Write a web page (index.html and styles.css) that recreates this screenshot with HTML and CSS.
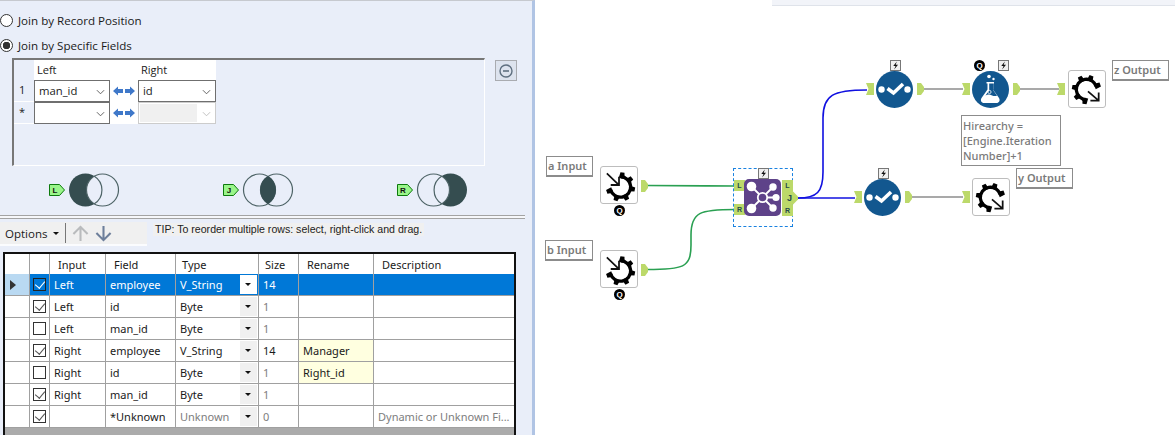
FILE: index.html
```html
<!DOCTYPE html>
<html lang="en">
<head>
<meta charset="utf-8">
<title>Join tool</title>
<link rel="stylesheet" href="styles.css">
</head>
<body>
<svg class="defs" width="0" height="0" aria-hidden="true">
  <defs>
    <g id="swap">
      <path d="M0 5l5-4.500V3h5v4H5v2.500z" fill="#3f78c9"/>
      <path d="M22 5l-5-4.500V3h-5v4h5v2.500z" fill="#3f78c9"/>
    </g>
    <path id="boltp" d="M6.500.5L2.500 5.500h2.500L3.500 9.500 7.800 4.200H5.200z" fill="#111"/>
    <g id="gear">
      <path d="M0-10.500A10.500 10.500 0 1 1-10.140 2.720" fill="none" stroke="#000" stroke-width="3.400"/>
      <g fill="#000">
        <path d="M-3-9l.9-6h4.200l.9 6z" transform="rotate(8)"/>
        <path d="M-3-9l.9-6h4.200l.9 6z" transform="rotate(52)"/>
        <path d="M-3-9l.9-6h4.200l.9 6z" transform="rotate(100)"/>
        <path d="M-3-9l.9-6h4.200l.9 6z" transform="rotate(152)"/>
        <path d="M-3-9l.9-6h4.200l.9 6z" transform="rotate(200)"/>
        <path d="M-3-9l.9-6h4.200l.9 6z" transform="rotate(250)"/>
      </g>
    </g>
    <g id="check">
      <circle cx="18.500" cy="18.500" r="18.500" fill="#12578f"/>
      <circle cx="5.500" cy="18.500" r="3.200" fill="#fff"/>
      <circle cx="31.500" cy="18.500" r="3.200" fill="#fff"/>
      <path d="M11.500 17.500l6 4.500 9.500-9" fill="none" stroke="#fff" stroke-width="3.600"/>
    </g>
    <path id="inport" d="M0 0h8v12H0l2.500-6z"/>
    <path id="outport" d="M0 0h4l3 4v4l-3 4H0z"/>
    <g id="setL">
      <circle cx="36.500" cy="17" r="16.500" fill="#354d50"/>
      <circle cx="53.500" cy="17" r="16" fill="#e9eef9" stroke="#4e6467" stroke-width="1.200"/>
      <path d="M45 2.900A16.500 16.500 0 0 1 45 31.100" fill="none" stroke="#4e6467" stroke-width="1.200"/>
    </g>
    <g id="setJ">
      <circle cx="36.500" cy="17" r="16" fill="none" stroke="#4e6467" stroke-width="1.200"/>
      <circle cx="53.500" cy="17" r="16" fill="none" stroke="#4e6467" stroke-width="1.200"/>
      <path d="M45 2.900A16.500 16.500 0 0 1 45 31.100A16.500 16.500 0 0 1 45 2.900z" fill="#354d50"/>
    </g>
    <g id="setR">
      <circle cx="53.500" cy="17" r="16.500" fill="#354d50"/>
      <circle cx="36.500" cy="17" r="16" fill="#e9eef9" stroke="#4e6467" stroke-width="1.200"/>
      <path d="M45 2.900A16.500 16.500 0 0 0 45 31.100" fill="none" stroke="#4e6467" stroke-width="1.200"/>
    </g>
  </defs>
</svg>
<div class="app">
  <section class="config">
    <div class="radio-row"><span class="radio"></span><span>Join by Record Position</span></div>
    <div class="radio-row second"><span class="radio on"></span><span>Join by Specific Fields</span></div>
    <div class="fields-line">
      <div class="fields">
        <div class="f-head"><span class="f-num"></span><span class="f-left">Left</span><span class="f-arrows"></span><span class="f-right">Right</span></div>
        <div class="f-row">
          <span class="f-num">1</span>
          <span class="combo">man_id<svg class="chev" viewBox="0 0 10 6"><path d="M1 1l4 4 4-4" fill="none" stroke="#555"/></svg></span>
          <span class="f-arrows"><svg viewBox="0 0 22 10"><use href="#swap"/></svg></span>
          <span class="combo wide">id<svg class="chev" viewBox="0 0 10 6"><path d="M1 1l4 4 4-4" fill="none" stroke="#555"/></svg></span>
        </div>
        <div class="f-row">
          <span class="f-num star">*</span>
          <span class="combo"><svg class="chev" viewBox="0 0 10 6"><path d="M1 1l4 4 4-4" fill="none" stroke="#555"/></svg></span>
          <span class="f-arrows"><svg viewBox="0 0 22 10"><use href="#swap"/></svg></span>
          <span class="combo wide off"><i></i><svg class="chev" viewBox="0 0 10 6"><path d="M1 1l4 4 4-4" fill="none" stroke="#bbb"/></svg></span>
        </div>
      </div>
      <button class="minus" type="button"><svg viewBox="0 0 14 14"><circle cx="7" cy="7" r="6" fill="none" stroke="#5f7080" stroke-width="1.400"/><path d="M4 7h6" stroke="#5f7080" stroke-width="1.600"/></svg></button>
    </div>
    <div class="venns">
      <div class="venn">
        <svg viewBox="0 0 72 34" width="72" height="34"><path class="tag" d="M.5 11.500h10l5 5.500-5 5.500H.5z"/><text class="tag-t" x="6" y="20">L</text><use href="#setL"/></svg>
      </div>
      <div class="venn">
        <svg viewBox="0 0 72 34" width="72" height="34"><path class="tag" d="M.5 11.500h10l5 5.500-5 5.500H.5z"/><text class="tag-t" x="6" y="20">J</text><use href="#setJ"/></svg>
      </div>
      <div class="venn">
        <svg viewBox="0 0 72 34" width="72" height="34"><path class="tag" d="M.5 11.500h10l5 5.500-5 5.500H.5z"/><text class="tag-t" x="6" y="20">R</text><use href="#setR"/></svg>
      </div>
    </div>
    <div class="rule"></div>
    <div class="toolbar-line">
      <div class="toolbar">
        <span class="opt">Options</span><span class="caret"></span><span class="sep"></span>
        <svg class="arrow" viewBox="0 0 18 18"><path d="M9 17V2M1.500 9.500L9 2l7.500 7.500" fill="none" stroke="#b9bbbd" stroke-width="2.200"/></svg>
        <svg class="arrow" viewBox="0 0 18 18"><path d="M9 1v15M1.500 8.500L9 16l7.500-7.500" fill="none" stroke="#6d7f9b" stroke-width="2.200"/></svg>
      </div>
      <span class="tip">TIP: To reorder multiple rows: select, right-click and drag.</span>
    </div>
    <div class="grid">
      <div class="g-row g-head">
        <span class="c0"></span><span class="c1"></span><span class="c2">Input</span><span class="c3">Field</span><span class="c4 hd-s">Type</span><span class="c5 hd-s">Size</span><span class="c6">Rename</span><span class="c7">Description</span>
      </div>
      <div class="g-row sel">
        <span class="c0"><b class="ptr"></b></span><span class="c1"><i class="cb on"></i></span><span class="c2">Left</span><span class="c3">employee</span><span class="c4">V_String<i class="dd"></i></span><span class="c5">14</span><span class="c6"></span><span class="c7"></span>
      </div>
      <div class="g-row">
        <span class="c0"></span><span class="c1"><i class="cb on"></i></span><span class="c2">Left</span><span class="c3">id</span><span class="c4">Byte<i class="dd"></i></span><span class="c5 dim">1</span><span class="c6"></span><span class="c7"></span>
      </div>
      <div class="g-row">
        <span class="c0"></span><span class="c1"><i class="cb"></i></span><span class="c2">Left</span><span class="c3">man_id</span><span class="c4">Byte<i class="dd"></i></span><span class="c5 dim">1</span><span class="c6"></span><span class="c7"></span>
      </div>
      <div class="g-row">
        <span class="c0"></span><span class="c1"><i class="cb on"></i></span><span class="c2">Right</span><span class="c3">employee</span><span class="c4">V_String<i class="dd"></i></span><span class="c5">14</span><span class="c6 ren">Manager</span><span class="c7"></span>
      </div>
      <div class="g-row">
        <span class="c0"></span><span class="c1"><i class="cb"></i></span><span class="c2">Right</span><span class="c3">id</span><span class="c4">Byte<i class="dd"></i></span><span class="c5 dim">1</span><span class="c6 ren">Right_id</span><span class="c7"></span>
      </div>
      <div class="g-row">
        <span class="c0"></span><span class="c1"><i class="cb on"></i></span><span class="c2">Right</span><span class="c3">man_id</span><span class="c4">Byte<i class="dd"></i></span><span class="c5 dim">1</span><span class="c6"></span><span class="c7"></span>
      </div>
      <div class="g-row">
        <span class="c0"></span><span class="c1"><i class="cb on"></i></span><span class="c2"></span><span class="c3">*Unknown</span><span class="c4 dim">Unknown<i class="dd"></i></span><span class="c5 dim">0</span><span class="c6"></span><span class="c7 dim">Dynamic or Unknown Fi...</span>
      </div>
      <div class="g-fill"></div>
    </div>
  </section>

  <section class="canvas">
    <div class="topstrip"></div>
    <svg class="wires" viewBox="0 0 640 435" width="640" height="435">
      <path class="wire g" d="M112 185.500C150 185.500 170 186 200 186"/>
      <path class="wire g" d="M112 269.500C148 269.500 156 268 156 245V235C156 212 165 209.500 200 209.500"/>
      <path class="wire b" d="M263 198C282 198 288 192 288 172V118C288 95 298 90 332 90"/>
      <path class="wire b" d="M263 198H320"/>
      <path class="wire n" d="M388 89H428"/>
      <path class="wire n" d="M484 89H524"/>
      <path class="wire n" d="M376 197H428"/>
    </svg>

    <div class="note n-a">a Input</div>
    <div class="note n-b">b Input</div>
    <div class="note n-z">z Output</div>
    <div class="note n-y">y Output</div>
    <div class="note hier">Hirearchy =<br>[Engine.Iteration<br>Number]+1</div>

    <!-- inputs -->
    <div class="tool" style="left:65px;top:166px"><svg viewBox="0 0 37 37"><use href="#gear" transform="translate(20 20.500)"/><path class="darrow" d="M6 6.500l12 11.500M18.500 10v8.500H10"/></svg></div>
    <span class="q" style="left:79px;top:205px">Q</span>
    <div class="tool" style="left:65px;top:250px"><svg viewBox="0 0 37 37"><use href="#gear" transform="translate(20 20.500)"/><path class="darrow" d="M6 6.500l12 11.500M18.500 10v8.500H10"/></svg></div>
    <span class="q" style="left:79px;top:289px">Q</span>
    <svg class="anc" style="left:106px;top:180px" viewBox="0 0 7 12"><use href="#outport"/></svg>
    <svg class="anc" style="left:106px;top:264px" viewBox="0 0 7 12"><use href="#outport"/></svg>

    <!-- join -->
    <div class="selbox"></div>
    <span class="bolt" style="left:223px;top:168px"><svg viewBox="0 0 10 10"><use href="#boltp"/></svg></span>
    <span class="port" style="left:199px;top:180px">L</span>
    <span class="port" style="left:199px;top:204px">R</span>
    <svg class="join" viewBox="0 0 37 37">
      <rect width="37" height="37" rx="5" fill="#5e4289"/>
      <g stroke="#fff" stroke-width="1.800" fill="none"><path d="M9 9l6 6M28 9l-6 6M9 28l6-6M28 28l-6-6M23 18.500h7"/><circle cx="18.500" cy="18.500" r="4.700"/></g>
      <g fill="#fff"><circle cx="7.500" cy="7.500" r="4.800"/><circle cx="29" cy="8" r="3.700"/><circle cx="32" cy="18.500" r="3.600"/><circle cx="7.500" cy="29.500" r="4.800"/><circle cx="29" cy="29" r="3.700"/></g>
    </svg>
    <span class="port" style="left:247px;top:180px">L</span>
    <span class="port" style="left:247px;top:205px">R</span>
    <span class="jout">J</span>

    <!-- filters -->
    <span class="bolt" style="left:355px;top:60px"><svg viewBox="0 0 10 10"><use href="#boltp"/></svg></span>
    <svg class="node" style="left:341px;top:71px" viewBox="0 0 37 37"><use href="#check"/></svg>
    <svg class="inp" style="left:331px;top:83px" viewBox="0 0 8 12"><use href="#inport"/></svg>
    <svg class="anc" style="left:382px;top:83px" viewBox="0 0 7 12"><use href="#outport"/></svg>

    <span class="bolt" style="left:343px;top:168px"><svg viewBox="0 0 10 10"><use href="#boltp"/></svg></span>
    <svg class="node" style="left:329px;top:179px" viewBox="0 0 37 37"><use href="#check"/></svg>
    <svg class="inp" style="left:319px;top:191px" viewBox="0 0 8 12"><use href="#inport"/></svg>
    <svg class="anc" style="left:370px;top:191px" viewBox="0 0 7 12"><use href="#outport"/></svg>

    <!-- formula -->
    <span class="q" style="left:439px;top:60px">Q</span>
    <span class="bolt" style="left:463px;top:60px"><svg viewBox="0 0 10 10"><use href="#boltp"/></svg></span>
    <svg class="node" style="left:437px;top:71px" viewBox="0 0 37 37">
      <circle cx="18.500" cy="18.500" r="18.500" fill="#12578f"/>
      <g fill="#fff"><circle cx="17" cy="5.500" r="1.800"/><circle cx="21.500" cy="8" r="1.200"/>
      <path d="M14.500 11h7.500v1.500h-1v6l6 8.500c1.500 2.500 0 5-2.500 5H12c-2.500 0-4-2.500-2.500-5l6-8.500v-6h-1zM17.200 12.500v6.800l-3.700 5.200c2.500-1.500 4.500-1 6-.3 2 .9 4 1 5.500.6l-3.800-5.500v-6.800z" fill-rule="evenodd"/></g>
      <circle cx="17.500" cy="21" r="1.600" fill="none" stroke="#fff" stroke-width=".8"/>
    </svg>
    <svg class="inp" style="left:427px;top:83px" viewBox="0 0 8 12"><use href="#inport"/></svg>
    <svg class="anc" style="left:478px;top:83px" viewBox="0 0 7 12"><use href="#outport"/></svg>

    <!-- outputs -->
    <svg class="inp" style="left:522px;top:83px" viewBox="0 0 8 12"><use href="#inport"/></svg>
    <div class="tool" style="left:533px;top:70px"><svg viewBox="0 0 37 37"><use href="#gear" transform="translate(18 19) rotate(180)"/><path class="darrow" d="M19.500 21l11 9.500M30.500 22v8.500H22"/></svg></div>
    <svg class="inp" style="left:427px;top:191px" viewBox="0 0 8 12"><use href="#inport"/></svg>
    <div class="tool" style="left:437px;top:178px"><svg viewBox="0 0 37 37"><use href="#gear" transform="translate(18 19) rotate(180)"/><path class="darrow" d="M19.500 21l11 9.500M30.500 22v8.500H22"/></svg></div>
  </section>
</div>
</body>
</html>
```

FILE: styles.css
```css
* { box-sizing: border-box; }
html, body { margin: 0; height: 100%; }
body { width: 1175px; height: 435px; overflow: hidden; background: #fff; font-family: "Open Sans", "Liberation Sans", sans-serif; font-size: 11.6px; color: #1a1a1a; }
.defs { position: absolute; }
.app { display: flex; height: 435px; }

.config { width: 535px; flex: none; height: 435px; overflow: hidden; background: #e9eef9; border-top: 1px solid #c6c9cf; border-right: 3px solid #b0c4e4; }
.radio-row { display: flex; align-items: center; gap: 5px; height: 16px; margin-top: 11px; }
.radio-row.second { margin-top: 9px; }
.radio { width: 13px; height: 13px; border: 1px solid #333; border-radius: 50%; background: #fff; flex: none; }
.radio.on { background: radial-gradient(circle, #333 0 3.500px, #fff 4px); }

.fields-line { display: flex; margin-top: 5px; padding-left: 12px; gap: 10px; align-items: flex-start; }
.fields { width: 473px; height: 108px; border: 1px solid #e5e9f2; border-top: 2px solid #777; border-left: 2px solid #777; border-right-color: #fff; border-bottom-color: #fff; font-size: 11px; }
.f-head { display: flex; height: 20px; }
.f-row { display: flex; height: 22px; }
.f-num { width: 20px; flex: none; padding: 2px 0 0 5px; }
.f-row .f-num { border-bottom: 1px solid #fff; }
.f-left, .f-right { width: 76px; background: #fff; padding: 2px 0 0 3px; flex: none; }
.f-right { width: 78px; }
.f-arrows { width: 28px; flex: none; display: flex; align-items: center; justify-content: center; }
.f-head .f-arrows, .f-row .f-arrows { background: #fff; }
.f-arrows svg { width: 22px; height: 10px; }
.combo { position: relative; width: 76px; height: 22px; flex: none; background: #fff; border: 1px solid #6f6f6f; padding: 2px 0 0 4px; font-size: 11.3px; }
.combo.wide { width: 78px; }
.combo.off { border-color: #ccc; }
.combo.off i { position: absolute; left: 1px; top: 1px; width: 57px; height: 18px; background: #f0f0f0; }
.chev { position: absolute; right: 4px; top: 8px; width: 9px; height: 6px; }
.minus { width: 22px; height: 21px; margin: 2px 0 0; padding: 2px; background: #dde3ee; border: 1px solid #a9abb0; display: flex; align-items: center; justify-content: center; }
.minus svg { width: 14px; height: 14px; }

.venns { display: flex; margin: 7px 0 0 49px; gap: 102px; height: 34px; }
.venn { width: 72px; height: 34px; }
.venn svg { display: block; }
.tag { fill: #9af58a; stroke: #0d7a0d; stroke-width: 1; }
.tag-t { font: 700 8px "Liberation Sans", sans-serif; fill: #111; text-anchor: middle; }

.rule { height: 4px; margin-top: 8px; width: 525px; border-top: 1px solid #a3a3a3; border-bottom: 1px solid #a3a3a3; background: #f6f7fa; }

.toolbar-line { display: flex; align-items: flex-start; height: 30px; margin-top: 3px; }
.toolbar { width: 147px; height: 24px; background: #f0f0f0; display: flex; align-items: center; padding-left: 5px; flex: none; border-bottom: 2px solid #fbfcfe; }
.opt { font-size: 11.5px; }
.caret { margin-left: 6px; border: 3px solid transparent; border-top: 3px solid #111; border-bottom: 0; }
.sep { width: 1px; height: 20px; background: #777; margin: 0 6px; }
.arrow { width: 17px; height: 17px; }
.arrow + .arrow { margin-left: 6px; }
.tip { margin: 1px 0 0 6px; padding: 0 2px; background: #f0f0f0; font-size: 10.6px; font-family: "Liberation Sans", sans-serif; color: #222; line-height: 13px; }

.grid { width: 513px; height: 183px; margin: 0 0 0 3px; border: 2px solid #111; border-bottom: 0; background: #ababab; display: flex; flex-direction: column; font-family: "Noto Sans", "Liberation Sans", sans-serif; font-size: 11px; }
.g-row { display: flex; height: 22px; background: #fff; border-bottom: 1px solid #a0a0a0; flex: none; }
.g-head { height: 20px; border-bottom: 0; }
.g-row > span { display: flex; align-items: center; padding-left: 4px; border-right: 1px solid #a0a0a0; position: relative; white-space: nowrap; overflow: hidden; }
.g-head > span { padding-left: 8px; }
.g-head > .hd-s { padding-left: 6px; }
.g-row > .c0 { width: 25px; padding-left: 0; background: #fff; }
.g-row > .c1 { width: 20px; justify-content: center; padding-left: 0; }
.c2 { width: 56px; }
.c3 { width: 70px; }
.c4 { width: 83px; }
.c5 { width: 40px; }
.c6 { width: 75px; }
.g-row > .c7 { width: 140px; border-right: 0; }
.dim { color: #7d7d7d; }
.g-row > .ren { background: #ffffe0; }
.cb { width: 13px; height: 13px; border: 1px solid #333; background: #fff; position: relative; display: block; }
.cb.on::after { content: ""; position: absolute; left: 3px; top: 0; width: 5px; height: 8px; border: solid #555; border-width: 0 1px 1px 0; transform: rotate(40deg); }
.dd { position: absolute; right: 1px; top: 1px; width: 17px; height: 19px; background: #f0f0f0; }
.dd::after { content: ""; position: absolute; left: 5px; top: 8px; border: 3px solid transparent; border-top-color: #111; border-bottom: 0; }
.g-row.sel { background: #0078d7; color: #fff; }
.sel .dim { color: #fff; }
.g-row.sel > .c0 { background: #b9d9f2; }
.sel .dd { background: #fff; }
.ptr { display: block; width: 0; height: 0; margin-left: 5px; border: 5px solid transparent; border-left: 6px solid #333; border-right: 0; }
.sel .cb { background: transparent; border-color: #222; }
.sel .cb.on::after { border-color: #fff; }
.g-fill { flex: 1; }

.canvas { position: relative; flex: 1; height: 435px; background: #fff; overflow: hidden; }
.topstrip { position: absolute; left: 237px; top: 0; right: 0; height: 6px; background: #f2f4f9; border-bottom: 1px solid #dfe3ea; }
.wires { position: absolute; left: 0; top: 0; }
.wire { fill: none; stroke-width: 1.600; }
.wire.g { stroke: #2aa052; }
.wire.b { stroke: #1010e0; }
.wire.n { stroke: #a9a9a9; stroke-width: 2; }
.note { position: absolute; width: 57px; height: 21px; border: 1px solid #8c8c8c; border-bottom-width: 2px; background: #fff; color: #7a7a7a; font-family: "Noto Sans", "Liberation Sans", sans-serif; font-size: 11px; font-weight: 600; padding-left: 1px; line-height: 17px; white-space: nowrap; }
.n-a { left: 11px; top: 156px; width: 47px; }
.n-b { left: 10px; top: 240px; width: 48px; }
.n-z { left: 577px; top: 60px; }
.n-y { left: 481px; top: 168px; }
.note.hier { left: 426px; top: 115px; width: 100px; height: 51px; font-weight: 500; line-height: 15px; padding: 2px 0 0 1px; border-bottom-width: 1px; }
.tool { position: absolute; width: 38px; height: 38px; background: #fff; border: 1px solid #bdbdbd; border-radius: 3px; }
.tool svg { display: block; width: 36px; height: 36px; overflow: visible; }
.darrow { fill: none; stroke: #111; stroke-width: 1.800; }
.q { position: absolute; width: 11px; height: 11px; border-radius: 50%; background: #000; color: #fff; font: 700 8px/11px "Liberation Sans", sans-serif; text-align: center; }
.node { position: absolute; width: 37px; height: 37px; }
.anc { position: absolute; width: 7px; height: 12px; fill: #bcd96a; }
.inp { position: absolute; width: 8px; height: 12px; fill: #bcd96a; }
.selbox { position: absolute; left: 198px; top: 168px; width: 60px; height: 59px; border: 1px dashed #1a82e0; }
.bolt { position: absolute; width: 11px; height: 11px; border: 1px solid #777; background: #f0f0f0; display: block; }
.bolt svg { display: block; width: 9px; height: 9px; }
.join { position: absolute; left: 209px; top: 179px; width: 37px; height: 37px; }
.port { position: absolute; width: 11px; height: 11px; background: #bcd96a; color: #254a4a; font: 700 7px/11px "Liberation Sans", sans-serif; text-align: center; }
.jout { position: absolute; left: 247px; top: 190px; width: 16px; height: 16px; background: #bcd96a; color: #254a4a; font: 700 9px/16px "Liberation Sans", sans-serif; padding-left: 5px; clip-path: polygon(0 0, 60% 0, 100% 40%, 100% 60%, 60% 100%, 0 100%); }
```
